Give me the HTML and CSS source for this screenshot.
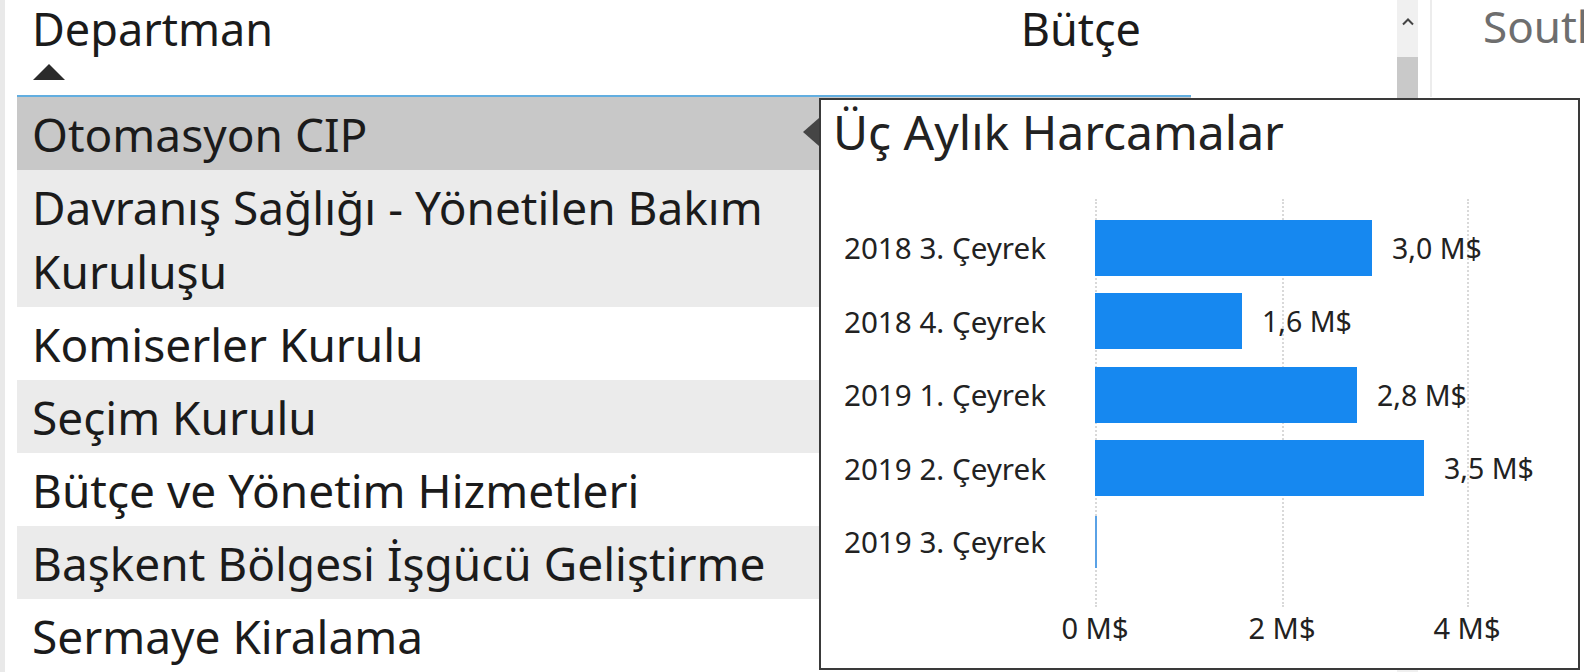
FILE: index.html
```html
<!DOCTYPE html>
<html lang="tr">
<head>
<meta charset="utf-8">
<title>Departman Bütçe</title>
<link rel="stylesheet" href="styles.css">
</head>
<body>
<div class="page">
  <div class="edge"></div>
  <div class="table">
    <div class="thead">
      <div class="th th-name">
        <span>Departman</span>
        <span class="sort"></span>
      </div>
      <div class="th th-budget">Bütçe</div>
    </div>
    <div class="tbody">
      <div class="row selected">Otomasyon CIP</div>
      <div class="row alt">Davranış Sağlığı - Yönetilen Bakım<br>Kuruluşu</div>
      <div class="row">Komiserler Kurulu</div>
      <div class="row alt">Seçim Kurulu</div>
      <div class="row">Bütçe ve Yönetim Hizmetleri</div>
      <div class="row alt">Başkent Bölgesi İşgücü Geliştirme</div>
      <div class="row">Sermaye Kiralama</div>
    </div>
  </div>
  <div class="spacer"></div>
  <div class="scrollbar">
    <svg class="up" width="14" height="9" viewBox="0 0 14 9"><path d="M2 7.5 L7 2.5 L12 7.5" fill="none" stroke="#444" stroke-width="2"/></svg>
    <div class="thumb"></div>
  </div>
  <div class="gap"></div>
  <div class="next">
    <div class="next-title">South</div>
  </div>

  <div class="tooltip">
    <span class="arrow"></span>
    <div class="tt-title">Üç Aylık Harcamalar</div>
    <div class="chart">
      <div class="labels">
        <div class="lab">2018 3. Çeyrek</div>
        <div class="lab">2018 4. Çeyrek</div>
        <div class="lab">2019 1. Çeyrek</div>
        <div class="lab">2019 2. Çeyrek</div>
        <div class="lab">2019 3. Çeyrek</div>
      </div>
      <div class="plot">
        <span class="grid g0"></span>
        <span class="grid g2"></span>
        <span class="grid g4"></span>
        <div class="bar-row"><span class="bar" style="width:277px"></span><span class="val">3,0 M$</span></div>
        <div class="bar-row"><span class="bar" style="width:147px"></span><span class="val">1,6 M$</span></div>
        <div class="bar-row"><span class="bar" style="width:262px"></span><span class="val">2,8 M$</span></div>
        <div class="bar-row"><span class="bar" style="width:329px"></span><span class="val">3,5 M$</span></div>
        <div class="bar-row"><span class="bar thin" style="width:2px"></span></div>
      </div>
    </div>
    <div class="axis">
      <span class="tick">0 M$</span>
      <span class="tick">2 M$</span>
      <span class="tick">4 M$</span>
    </div>
  </div>
</div>
</body>
</html>
```
FILE: styles.css
```css
* { box-sizing: border-box; }
html, body {
  margin: 0;
  padding: 0;
  width: 1584px;
  height: 672px;
  overflow: hidden;
  background: #ffffff;
  font-family: "Noto Sans", "Open Sans", sans-serif;
  color: #1b1b1b;
}
.page {
  position: relative;
  display: flex;
  width: 1584px;
  height: 672px;
}
.edge {
  width: 17px;
  flex: none;
  border-left: 5px solid #e9e9e9;
}
.table {
  width: 1174px;
  flex: none;
  display: flex;
  flex-direction: column;
}
.thead {
  height: 98px;
  display: flex;
  border-bottom: 2px solid #62aee0;
  padding: 0 50px 0 15px;
}
.th {
  font-size: 45px;
  line-height: 58px;
  padding-top: 0;
}
.th-name {
  flex: 1;
  display: flex;
  flex-direction: column;
}
.sort {
  width: 0;
  height: 0;
  margin-top: 6px;
  margin-left: 1px;
  border-left: 16px solid transparent;
  border-right: 16px solid transparent;
  border-bottom: 16px solid #2b2b2b;
}
.tbody {
  display: flex;
  flex-direction: column;
}
.row {
  font-size: 46px;
  line-height: 64px;
  padding: 4.5px 15px;
  background: #ffffff;
  white-space: nowrap;
}
.row.alt { background: #ebebeb; }
.row.selected { background: #c8c8c8; }

.spacer { width: 206px; flex: none; }
.scrollbar {
  width: 21px;
  flex: none;
  background: #f0f0f0;
  display: flex;
  flex-direction: column;
  align-items: center;
}
.up { margin-top: 17px; }
.thumb {
  margin-top: 31px;
  width: 21px;
  height: 60px;
  background: #c9c9c9;
}
.gap {
  width: 14px;
  flex: none;
  border-right: 2px solid #ececec;
  height: 97px;
}
.next {
  flex: 1;
  padding-left: 51px;
  overflow: hidden;
}
.next-title {
  font-size: 44px;
  line-height: 52px;
  color: #6e6e6e;
  white-space: nowrap;
}

/* tooltip */
.tooltip {
  position: absolute;
  left: 819px;
  top: 98px;
  width: 761px;
  height: 572px;
  background: #ffffff;
  border: 2px solid #3a3a3a;
  display: flex;
  flex-direction: column;
}
.arrow {
  position: absolute;
  left: -18px;
  top: 18px;
  width: 0;
  height: 0;
  border-top: 14px solid transparent;
  border-bottom: 14px solid transparent;
  border-right: 16px solid #454545;
}
.tt-title {
  font-size: 48px;
  line-height: 56px;
  padding: 4px 0 0 12px;
  color: #222;
  white-space: nowrap;
}
.chart {
  display: flex;
  margin-top: 51px;
}
.labels {
  width: 274px;
  padding-left: 23px;
  flex: none;
}
.lab {
  height: 73.5px;
  display: flex;
  align-items: center;
  font-size: 29.6px;
  color: #222;
  white-space: nowrap;
}
.plot {
  position: relative;
  flex: 1;
}
.grid {
  position: absolute;
  top: -12px;
  height: 408px;
  width: 0;
  border-left: 2px dotted #d9d9d9;
}
.g0 { left: 0; }
.g2 { left: 187px; }
.g4 { left: 372px; }
.bar-row {
  position: relative;
  height: 73.5px;
  display: flex;
  align-items: center;
}
.bar {
  height: 56px;
  background: #1688f0;
  flex: none;
}
.bar.thin { background: #5aa2e6; height: 52px; }
.val {
  margin-left: 20px;
  font-size: 28.5px;
  color: #222;
  white-space: nowrap;
}
.axis {
  position: relative;
  height: 50px;
  margin-top: 29px;
  font-size: 29px;
  line-height: 40px;
  color: #222;
}
.tick {
  position: absolute;
  top: 0;
  transform: translateX(-50%);
  white-space: nowrap;
}
.tick:nth-child(1) { left: 274px; }
.tick:nth-child(2) { left: 461px; }
.tick:nth-child(3) { left: 646px; }
```
